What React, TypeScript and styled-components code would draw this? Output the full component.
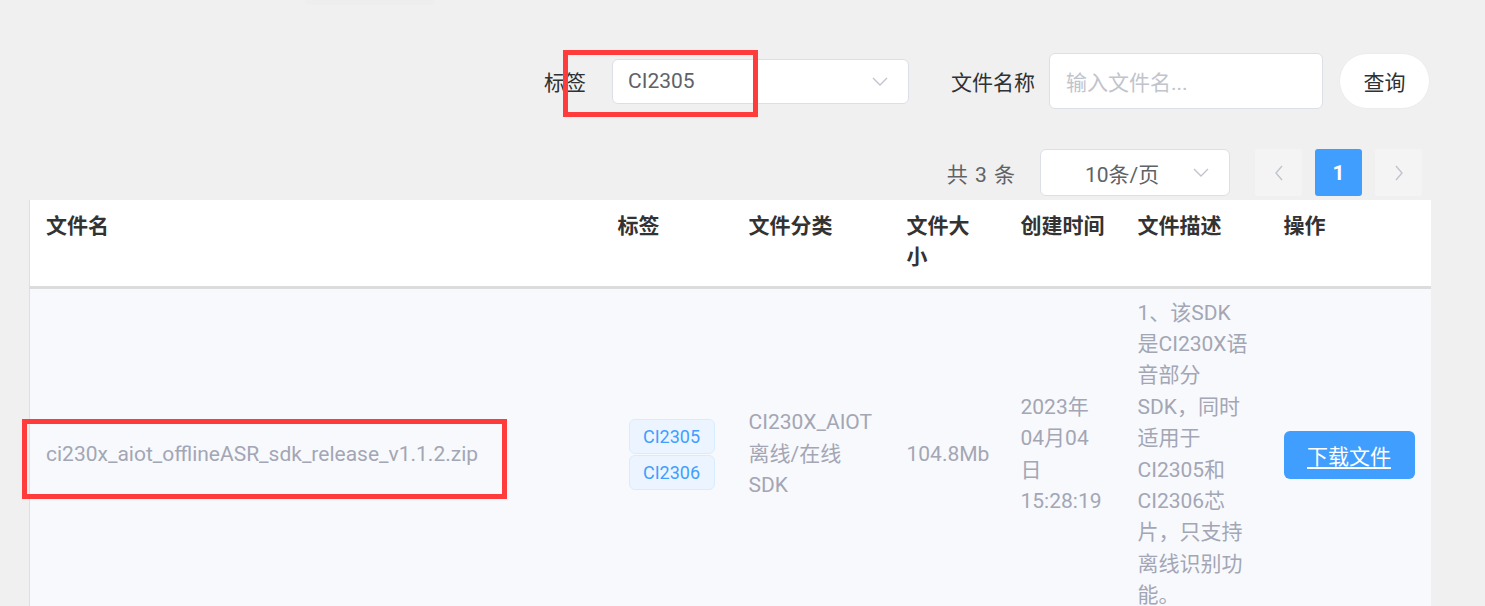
import React from 'react'
import styled, { createGlobalStyle } from 'styled-components'

const GlobalStyle = createGlobalStyle`
  html, body {
    margin: 0;
    padding: 0;
    background: #f0f0f0;
    font-family: Roboto, 'Noto Sans CJK SC', sans-serif;
    overflow: hidden;
  }
`

const Page = styled.div`
  position: relative;
  width: 1485px;
  height: 606px;
  overflow: hidden;
`
const TopStub = styled.div`
  margin-left: 305px;
  width: 130px;
  height: 3px;
  background: #eeeeee;
  box-shadow: 0 1px 2px rgba(0, 0, 0, 0.02);
  border-radius: 0 0 4px 4px;
`
const Toolbar = styled.div`
  display: flex;
  justify-content: flex-end;
  align-items: center;
  margin-top: 50px;
  height: 56px;
  padding-right: 55px;
`
const Label = styled.span<{ $gap: number }>`
  font-size: 21px;
  color: #303133;
  margin-right: ${p => p.$gap}px;
  white-space: nowrap;
`
const SelectBox = styled.div<{ $w: number; $h: number; $center?: boolean }>`
  box-sizing: border-box;
  width: ${p => p.$w}px;
  height: ${p => p.$h}px;
  background: #fff;
  border: 1px solid #dcdfe6;
  border-radius: 6px;
  display: flex;
  align-items: center;
  padding: 0 20px 0 ${p => (p.$center ? 44 : 15)}px;
  font-size: 21px;
  color: #606266;
`
const SelectText = styled.span`
  flex: 1;
`
const Input = styled.div`
  box-sizing: border-box;
  width: 274px;
  height: 56px;
  background: #fff;
  border: 1px solid #dcdfe6;
  border-radius: 6px;
  display: flex;
  align-items: center;
  padding: 0 16px;
  font-size: 21px;
  color: #c0c4cc;
  margin-right: 16px;
`
const QueryButton = styled.button`
  box-sizing: border-box;
  width: 91px;
  height: 56px;
  border: 1px solid #ececec;
  border-radius: 28px;
  background: #fff;
  font-family: inherit;
  font-size: 21px;
  color: #303133;
  padding: 0;
`
const Pager = styled.div`
  display: flex;
  justify-content: flex-end;
  align-items: center;
  margin-top: 40px;
  height: 47px;
  padding-right: 63px;
  gap: 13px;
`
const Total = styled.span`
  font-size: 21px;
  color: #606266;
  margin-right: 12px;
  word-spacing: 2px;
`
const PagerSelectWrap = styled.div`
  margin-right: 12px;
`
const PageBtn = styled.div<{ $active?: boolean }>`
  width: 47px;
  height: 47px;
  border-radius: 3px;
  background: ${p => (p.$active ? '#409eff' : '#f4f4f5')};
  color: ${p => (p.$active ? '#fff' : '#c0c4cc')};
  display: flex;
  align-items: center;
  justify-content: center;
  font-size: 21px;
  font-weight: 700;
`
const Table = styled.table`
  margin: 4px 0 0 29px;
  width: 1401px;
  border-collapse: collapse;
  table-layout: fixed;
  background: #fff;
  border-left: 1px solid #dcdfe6;
`
const Th = styled.th`
  box-sizing: border-box;
  height: 87px;
  padding: 11px 16px;
  text-align: left;
  vertical-align: top;
  font-size: 21px;
  line-height: 31px;
  font-weight: 700;
  color: #333;
  border-bottom: 3px solid #dcdcdc;
`
const Row = styled.tr`
  background: #f8f9fc;
`
const Td = styled.td`
  padding: 9px 16px;
  vertical-align: middle;
  font-size: 21px;
  line-height: 31.4px;
  color: #a3a6b5;
  word-break: normal;
  overflow-wrap: normal;
`
const TagList = styled.div`
  display: flex;
  flex-direction: column;
  align-items: flex-start;
  gap: 1px;
  padding-left: 11px;
`
const Tag = styled.span`
  box-sizing: border-box;
  width: 86px;
  height: 35px;
  display: flex;
  align-items: center;
  justify-content: center;
  background: #ecf5ff;
  border: 1px solid #d9ecff;
  border-radius: 6px;
  color: #409eff;
  font-size: 18px;
`
const DownloadButton = styled.button`
  box-sizing: border-box;
  width: 131px;
  height: 48px;
  border: none;
  border-radius: 6px;
  background: #409eff;
  color: #fff;
  font-family: inherit;
  font-size: 21px;
  text-decoration: underline;
  text-underline-offset: 3px;
  padding: 0;
`
const Highlight = styled.div<{ $x: number; $y: number; $w: number; $h: number }>`
  position: absolute;
  left: ${p => p.$x}px;
  top: ${p => p.$y}px;
  width: ${p => p.$w}px;
  height: ${p => p.$h}px;
  box-sizing: border-box;
  border: 5px solid #ff3b3b;
  pointer-events: none;
`

const Chevron = ({ dir }: { dir: 'down' | 'left' | 'right' }) => {
  const d =
    dir === 'down' ? 'M1 1 L8 8 L15 1' : dir === 'left' ? 'M7 1 L1 8 L7 15' : 'M1 1 L7 8 L1 15'
  const w = dir === 'down' ? 16 : 8
  const h = dir === 'down' ? 9 : 16
  return (
    <svg width={w} height={h} viewBox={`0 0 ${w} ${h}`} fill='none'>
      <path d={d} stroke='#c0c4cc' strokeWidth='1.4' />
    </svg>
  )
}

const columns = [
  { title: '文件名', width: 572 },
  { title: '标签', width: 131 },
  { title: '文件分类', width: 158 },
  { title: '文件大小', width: 114 },
  { title: '创建时间', width: 117 },
  { title: '文件描述', width: 146 },
  { title: '操作', width: 163 }
]

const App = () => (
  <Page>
    <GlobalStyle />
    <TopStub />
    <Toolbar>
      <Label $gap={26}>标签</Label>
      <SelectBox $w={297} $h={45} style={{ marginRight: 42 }}>
        <SelectText>CI2305</SelectText>
        <Chevron dir='down' />
      </SelectBox>
      <Label $gap={14}>文件名称</Label>
      <Input>输入文件名...</Input>
      <QueryButton>查询</QueryButton>
    </Toolbar>

    <Pager>
      <Total>共 3 条</Total>
      <PagerSelectWrap>
        <SelectBox $w={190} $h={47} $center>
          <SelectText>10条/页</SelectText>
          <Chevron dir='down' />
        </SelectBox>
      </PagerSelectWrap>
      <PageBtn>
        <Chevron dir='left' />
      </PageBtn>
      <PageBtn $active>1</PageBtn>
      <PageBtn>
        <Chevron dir='right' />
      </PageBtn>
    </Pager>

    <Table>
      <colgroup>
        {columns.map(c => (
          <col key={c.title} style={{ width: c.width }} />
        ))}
      </colgroup>
      <thead>
        <tr>
          {columns.map(c => (
            <Th key={c.title}>{c.title}</Th>
          ))}
        </tr>
      </thead>
      <tbody>
        <Row>
          <Td>ci230x_aiot_offlineASR_sdk_release_v1.1.2.zip</Td>
          <Td>
            <TagList>
              <Tag>CI2305</Tag>
              <Tag>CI2306</Tag>
            </TagList>
          </Td>
          <Td>CI230X_AIOT离线/在线SDK</Td>
          <Td>104.8Mb</Td>
          <Td>2023年04月04日 15:28:19</Td>
          <Td>1、该SDK是CI230X语音部分SDK，同时适用于CI2305和CI2306芯片，只支持离线识别功能。</Td>
          <Td>
            <DownloadButton>下载文件</DownloadButton>
          </Td>
        </Row>
      </tbody>
    </Table>

    <Highlight $x={563} $y={50} $w={195} $h={67} />
    <Highlight $x={22} $y={419} $w={485} $h={80} />
  </Page>
)

export default App
